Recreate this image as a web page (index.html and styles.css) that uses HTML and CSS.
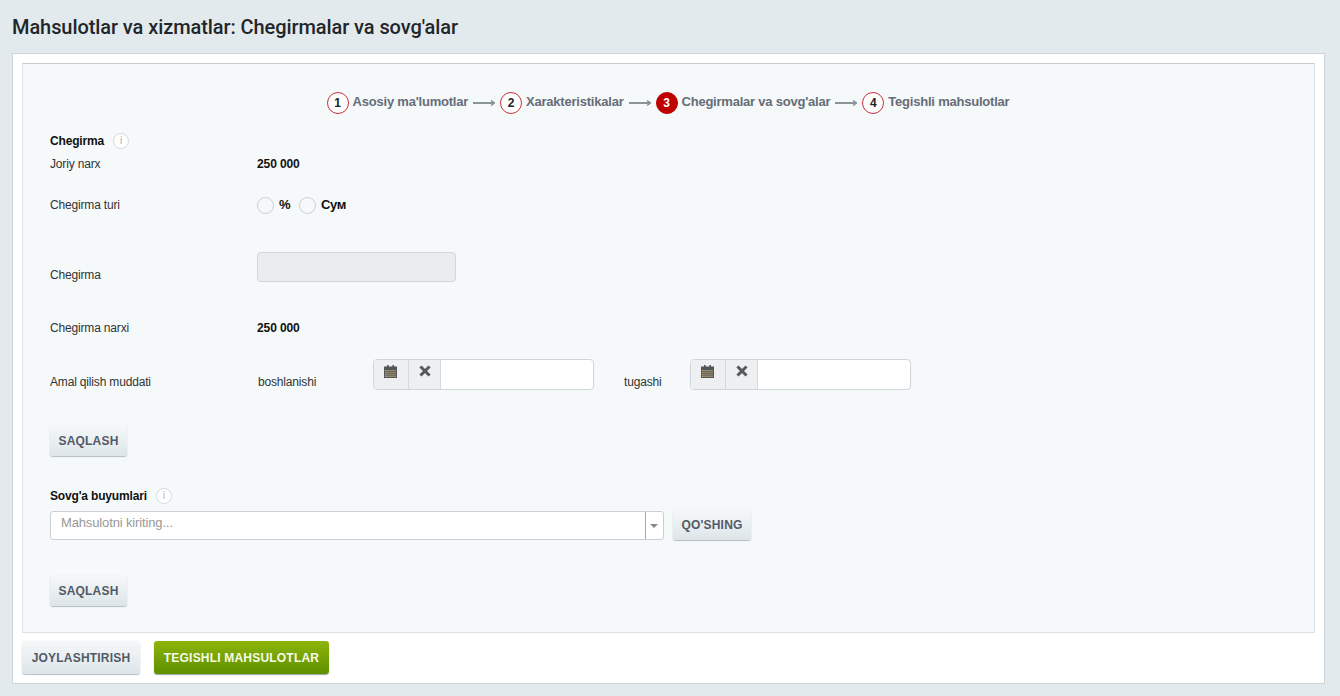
FILE: index.html
```html
<!DOCTYPE html>
<html lang="uz">
<head>
<meta charset="utf-8">
<title>Chegirmalar va sovg'alar</title>
<link rel="stylesheet" href="styles.css">
</head>
<body>
<svg class="defs" width="0" height="0" aria-hidden="true">
  <symbol id="arrow" viewBox="0 0 22 8"><path d="M0 4H20" stroke="#7f8a8c" stroke-width="1.8" fill="none"/><path d="M18 1.5L21.5 4L18 6.5" stroke="#7f8a8c" stroke-width="1.2" fill="none"/></symbol>
  <symbol id="cal" viewBox="0 0 13 13"><path d="M0 1.5H13V13H0Z" fill="#4f5559"/><path d="M3 0H4.6V3H3ZM8.4 0H10V3H8.4Z" fill="#4f5559"/><path d="M1 5H12V12H1Z" fill="#c2a56c"/><path d="M1 6.6H12M1 8.4H12M1 10.2H12M3 5V12M5 5V12M7 5V12M9 5V12M11 5V12" stroke="#4f5559" stroke-width=".7"/></symbol>
  <symbol id="times" viewBox="0 0 12 12"><path d="M2.5 2.5L9.5 9.5M9.5 2.5L2.5 9.5" stroke="#53595e" stroke-width="3" stroke-linecap="square" fill="none"/></symbol>
</svg>
<h1 class="title">Mahsulotlar va xizmatlar: Chegirmalar va sovg'alar</h1>
<main class="card">
  <section class="panel">
    <ol class="steps">
      <li class="step"><span class="num">1</span><span class="step-label">Asosiy ma'lumotlar</span><svg class="arrow"><use href="#arrow"/></svg></li>
      <li class="step"><span class="num">2</span><span class="step-label">Xarakteristikalar</span><svg class="arrow"><use href="#arrow"/></svg></li>
      <li class="step"><span class="num num-active">3</span><span class="step-label">Chegirmalar va sovg'alar</span><svg class="arrow"><use href="#arrow"/></svg></li>
      <li class="step"><span class="num">4</span><span class="step-label">Tegishli mahsulotlar</span></li>
    </ol>

    <div class="heading heading-first">Chegirma <span class="info">i</span></div>
    <div class="row row-price"><span class="label">Joriy narx</span><b class="value">250 000</b></div>
    <div class="row row-type">
      <span class="label">Chegirma turi</span>
      <span class="radio"></span><b class="radio-text">%</b>
      <span class="radio radio-second"></span><b class="radio-text">Сум</b>
    </div>
    <div class="row row-discount"><span class="label label-low">Chegirma</span><div class="disabled-input"></div></div>
    <div class="row row-final"><span class="label">Chegirma narxi</span><b class="value">250 000</b></div>
    <div class="row row-dates">
      <span class="label label-date">Amal qilish muddati</span>
      <span class="date-caption caption-start">boshlanishi</span>
      <div class="date-field">
        <span class="date-btn btn-cal"><svg class="ico-cal"><use href="#cal"/></svg></span>
        <span class="date-btn btn-clear"><svg class="ico-x"><use href="#times"/></svg></span>
      </div>
      <span class="date-caption caption-end">tugashi</span>
      <div class="date-field">
        <span class="date-btn btn-cal"><svg class="ico-cal"><use href="#cal"/></svg></span>
        <span class="date-btn btn-clear"><svg class="ico-x"><use href="#times"/></svg></span>
      </div>
    </div>
    <button class="btn btn-save-first" type="button">SAQLASH</button>

    <div class="heading heading-gift">Sovg'a buyumlari <span class="info">i</span></div>
    <div class="gift-row">
      <div class="select">
        <span class="select-text">Mahsulotni kiriting...</span>
        <span class="select-caret"></span>
      </div>
      <button class="btn btn-add" type="button">QO'SHING</button>
    </div>
    <button class="btn btn-save-second" type="button">SAQLASH</button>
  </section>
  <footer class="actions">
    <button class="btn btn-large" type="button">JOYLASHTIRISH</button>
    <button class="btn btn-large btn-green" type="button">TEGISHLI MAHSULOTLAR</button>
  </footer>
</main>
</body>
</html>
```

FILE: styles.css
```css
* { box-sizing: border-box; }
html, body { height: 100%; }
body {
  margin: 0;
  padding: 0 15px 12px 12px;
  background: #e3eaed;
  font-family: "Liberation Sans", Arial, sans-serif;
  font-size: 12px;
  letter-spacing: -.17px;
  color: #222;
  overflow: hidden;
}
.defs { position: absolute; }
.title {
  margin: 0;
  height: 53px;
  padding-top: 13px;
  font-family: Roboto, sans-serif;
  font-size: 20px;
  font-weight: 500;
  letter-spacing: -.08px;
  line-height: 28px;
  color: #22262a;
}
.card {
  height: 631px;
  background: #fff;
  border: 1px solid #cdd4d7;
  padding: 9px 9px 0;
}
.panel {
  height: 570px;
  background: #f5f9fa;
  border: 1px solid #dce3e6;
  border-top-color: #c4ccd2;
  padding: 0 27px;
}
.steps {
  display: flex;
  justify-content: center;
  align-items: center;
  gap: 5px;
  list-style: none;
  margin: 0;
  padding: 27px 1px 0 0;
  height: 50px;
  font-size: 13px;
  font-weight: 700;
  letter-spacing: -.22px;
  color: #666c78;
}
.step { display: flex; align-items: center; }
.step-label { position: relative; top: -1px; }
.num {
  width: 22px;
  height: 22px;
  border: 1px solid #c9303e;
  border-radius: 50%;
  background: #fff;
  color: #222;
  font-size: 12px;
  letter-spacing: 0;
  line-height: 21px;
  text-align: center;
  margin-right: 4px;
}
.num-active { background: #c00000; border-color: #c00000; color: #fff; }
.arrow { width: 22px; height: 8px; margin-left: 5px; }
.heading {
  font-weight: 700;
  color: #111;
  line-height: 16px;
  display: flex;
  align-items: center;
  gap: 9px;
}
.heading-first { margin-top: 19px; }
.heading-gift { margin-top: 32px; }
.info {
  width: 16px;
  height: 16px;
  border: 1px solid #d5dadc;
  border-radius: 50%;
  background: #fff;
  color: #a9afb2;
  font-size: 10px;
  font-weight: 400;
  line-height: 14px;
  text-align: center;
}
.row { display: flex; align-items: center; }
.label { width: 207px; flex: none; color: #333; }
.value { color: #111; letter-spacing: -.1px; }
.row-price { height: 16px; margin-top: 7px; }
.row-type { height: 18px; margin-top: 24px; }
.radio {
  width: 17px;
  height: 17px;
  border: 1px solid #c9cfd2;
  border-radius: 50%;
  background: #f5f9fa;
  flex: none;
}
.radio-second { margin-left: 8.6px; }
.radio-text { margin-left: 5px; font-size: 13px; letter-spacing: -.25px; color: #111; position: relative; top: -1px; }
.row-discount { height: 30px; margin-top: 38px; }
.label-low { position: relative; top: 8px; }
.disabled-input {
  width: 199px;
  height: 30px;
  background: #e9edef;
  border: 1px solid #cfd5d8;
  border-radius: 4px;
}
.row-final { height: 16px; margin-top: 38px; }
.row-dates { height: 31px; margin-top: 23px; }
.label-date { position: relative; top: 7px; }
.date-caption { position: relative; top: 7px; color: #333; flex: none; }
.caption-start { width: 116px; padding-left: 1px; }
.caption-end { margin-left: 30px; width: 66px; }
.date-field {
  display: flex;
  width: 221px;
  height: 31px;
  background: #fff;
  border: 1px solid #cfd5d8;
  border-radius: 4px;
  overflow: hidden;
}
.date-btn {
  display: flex;
  justify-content: center;
  padding-top: 5px;
  height: 100%;
  background: #eeeff0;
  border-right: 1px solid #d5d9db;
}
.btn-cal { width: 35px; padding-right: 2px; }
.btn-clear { width: 32px; }
.ico-cal { width: 13px; height: 13px; }
.ico-x { width: 12px; height: 12px; }
.btn {
  display: block;
  height: 30px;
  padding: 0 8px;
  border: 0;
  border-radius: 3px;
  background: linear-gradient(#f5f8f9, #dde5e9);
  box-shadow: 0 1px 1px #b4bfc4, 0 0 1px #c8d0d4;
  font-family: "Liberation Sans", Arial, sans-serif;
  font-size: 12px;
  font-weight: 700;
  letter-spacing: .2px;
  color: #525a66;
  white-space: nowrap;
}
.btn-save-first { width: 77px; margin-top: 36px; }
.gift-row { display: flex; align-items: flex-start; margin-top: 7px; }
.select {
  display: flex;
  width: 614px;
  height: 29px;
  background: #fff;
  border: 1px solid #c9cfd2;
  border-radius: 3px;
}
.select-text {
  flex: 1;
  padding-left: 10px;
  font-size: 13px;
  letter-spacing: -.14px;
  line-height: 22px;
  color: #999;
}
.select-caret {
  position: relative;
  width: 18px;
  border-left: 1px solid #a9a9a9;
}
.select-caret::after {
  content: "";
  position: absolute;
  left: 4px;
  top: 12px;
  border: 4px solid transparent;
  border-top: 4px solid #888;
  border-bottom: 0;
}
.btn-add { width: 78px; margin-left: 9px; margin-top: -1px; }
.btn-save-second { width: 77px; margin-top: 36px; }
.actions { display: flex; gap: 14px; padding-top: 8px; }
.btn-large { width: 118px; height: 33px; padding: 0; }
.btn-green {
  width: 175px;
  background: linear-gradient(#8db50a, #5f8f00);
  box-shadow: 0 1px 1px #9aa89a;
  color: #f6fbe6;
}
```
